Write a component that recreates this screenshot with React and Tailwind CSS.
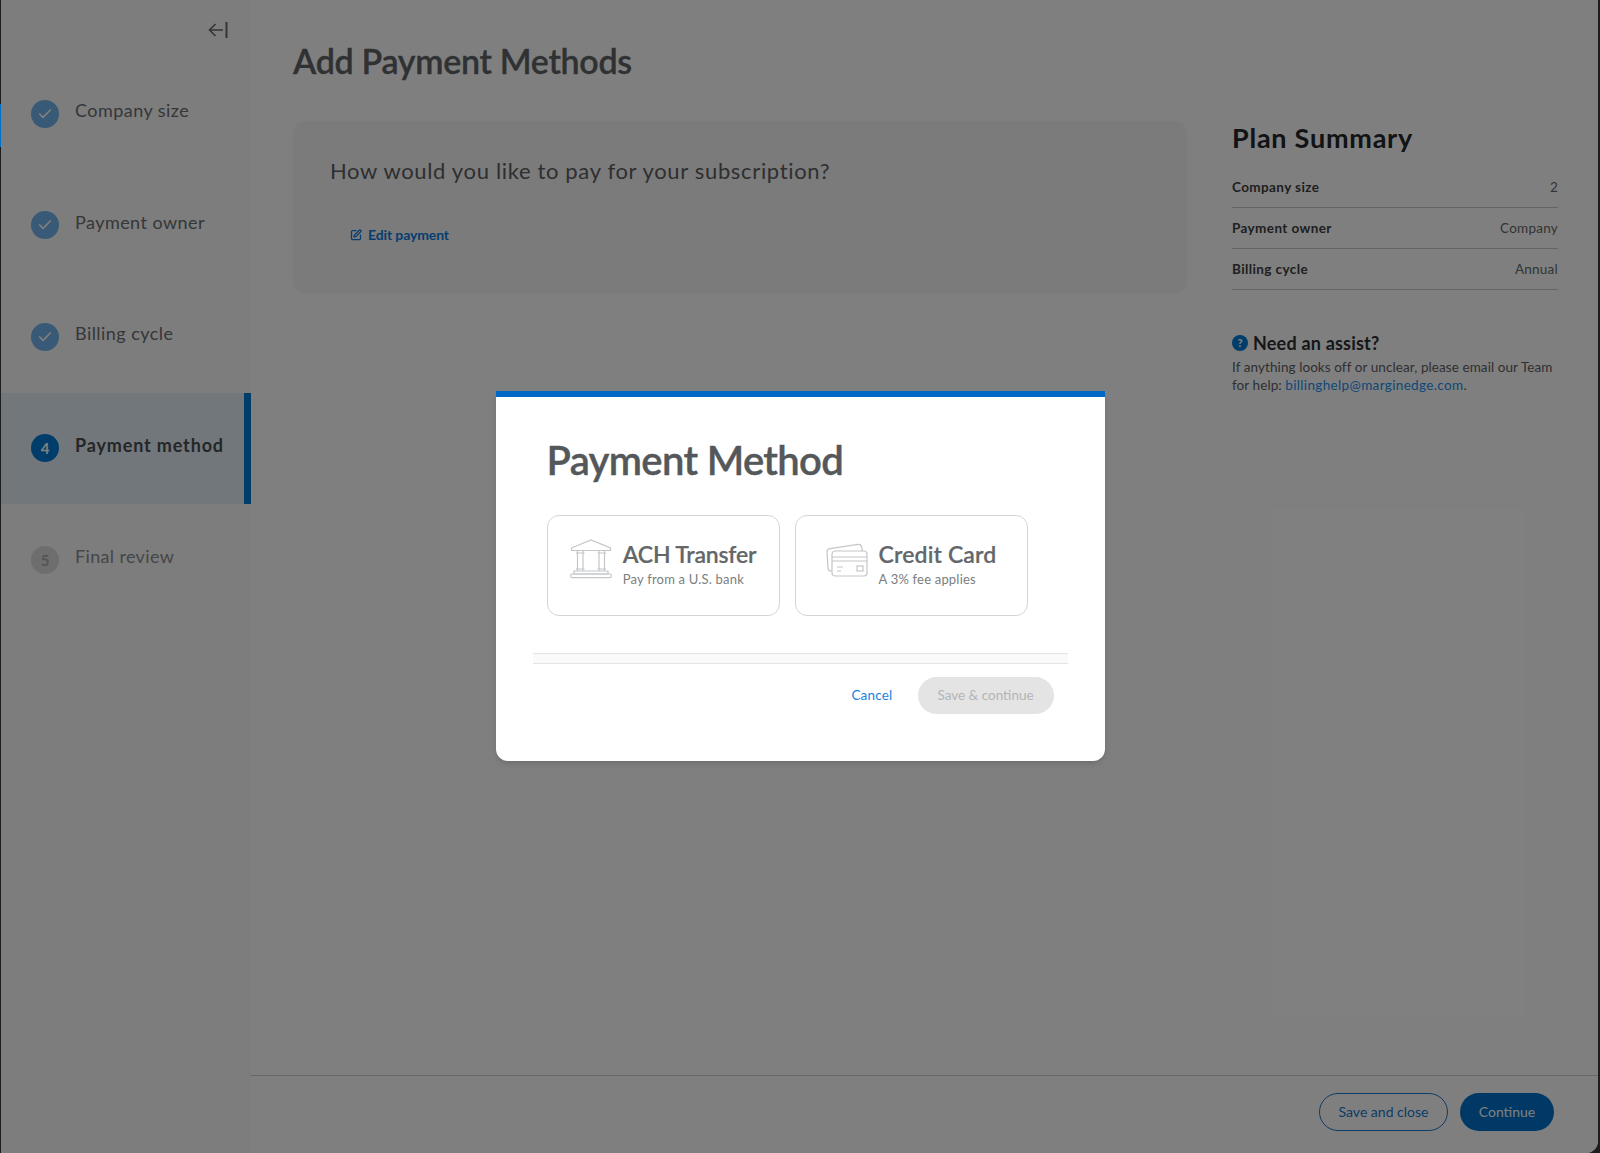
import React from 'react';
import { Check, SquarePen } from 'lucide-react';

const FONT = 'font-["Lato","Noto_Sans",sans-serif]';

const steps = [
    { label: 'Company size', state: 'done' },
    { label: 'Payment owner', state: 'done' },
    { label: 'Billing cycle', state: 'done' },
    { label: 'Payment method', state: 'active', num: 4 },
    { label: 'Final review', state: 'todo', num: 5 },
];

const summary = [
    ['Company size', '2'],
    ['Payment owner', 'Company'],
    ['Billing cycle', 'Annual'],
];

const StepBadge = ({ step }) => {
    if (step.state === 'done') {
        return (
            <span className="w-7 h-7 rounded-full bg-[#70b4ec] flex items-center justify-center shrink-0">
                <Check className="w-4 h-4 text-white" strokeWidth={2.5} />
            </span>
        );
    }
    if (step.state === 'active') {
        return (
            <span className="w-7 h-7 rounded-full bg-[#007ad6] flex items-center justify-center shrink-0 text-[15px] font-bold text-white">
                {step.num}
            </span>
        );
    }
    return (
        <span className="w-7 h-7 rounded-full bg-[#dcdcdc] flex items-center justify-center shrink-0 text-[15px] font-bold text-[#a8a8a8]">
            {step.num}
        </span>
    );
};

const BankIcon = () => (
    <svg width="42" height="40" viewBox="0 0 42 40" fill="none" stroke="#c4c6c8" strokeWidth="1.2" className="shrink-0 -mt-[10px]">
        <path d="M1.5 9 L21 1 L40.5 9 V11.5 H1.5 Z" />
        <path d="M7.5 11.5 V32 M13 11.5 V32 M29 11.5 V32 M34.5 11.5 V32" />
        <path d="M6 14 H14.5 M27.5 14 H36 M6 30 H14.5 M27.5 30 H36" />
        <path d="M4 32 H38 V35 H4 Z" />
        <rect x="0.8" y="35" width="40.4" height="3.6" rx="1" />
    </svg>
);

const CardIcon = () => (
    <svg width="42" height="34" viewBox="0 0 42 34" fill="none" stroke="#c4c6c8" strokeWidth="1.2" className="shrink-0 -mt-[8px]">
        <path d="M6 28 L5 28 Q2 28 2 25 L1 9 Q1 6 4 5.6 L32 1.4 Q35 1 35.6 4 L36.5 8" />
        <rect x="6" y="8" width="35" height="25" rx="3" />
        <path d="M6 14 H41 M6 18 H41" />
        <path d="M11 24 H17 M11 28 H15" />
        <rect x="31" y="23" width="6" height="5" />
    </svg>
);

const PayOption = ({ icon, title, sub, titleTracking }) => (
    <button className="w-[233px] h-[101px] border border-[#d5d5d5] rounded-xl bg-white flex items-center justify-center gap-[12px] pb-1">
        {icon}
        <span className="flex flex-col items-start -ml-[1px]">
            <span className={`text-[23px] leading-[30px] font-semibold text-[#63676a] [-webkit-text-stroke:0.2px] ${titleTracking}`}>{title}</span>
            <span className="text-[13px] leading-[20px] text-[#7b7e80] tracking-[0.2px]">{sub}</span>
        </span>
    </button>
);

const App = () => {
    return (
        <div className={`${FONT} relative w-full h-[1153px] overflow-hidden bg-[#3a3a3a]`}>
            <div className="flex h-full ml-px mr-[2px] rounded-br-xl overflow-hidden bg-white">
                {/* sidebar */}
                <aside className="w-[250px] shrink-0 bg-[#fafafa]">
                    <div className="flex justify-end pt-[21px] pr-[23px] h-[58px]">
                        <svg width="20" height="18" viewBox="0 0 20 18" fill="none" stroke="#686a6c" strokeWidth="1.6">
                            <path d="M1.5 9 H15 M7.5 3 L1.5 9 L7.5 15" />
                            <path d="M18.5 1 V17" strokeWidth="2" />
                        </svg>
                    </div>
                    <nav className="flex flex-col">
                        {steps.map((step) => (
                            <div
                                key={step.label}
                                className={`h-[111.5px] pl-[30px] flex items-center gap-[16px] ${step.state === 'active' ? 'bg-[#e4eef6] border-r-[7px] border-[#007ad6]' : ''}`}
                            >
                                <StepBadge step={step} />
                                <span className={`text-[18px] -mt-[6px] ${step.state === 'active' ? 'font-bold text-[#4a4c4e] tracking-[0.85px]' : step.state === 'done' ? 'text-[#6c6e70] tracking-[0.45px]' : 'text-[#8a8c8e] tracking-[0.35px]'}`}>
                                    {step.label}
                                </span>
                            </div>
                        ))}
                    </nav>
                </aside>

                {/* main */}
                <div className="flex-1 flex flex-col bg-white">
                    <div className="flex-1 flex pl-[42px] pr-[40px]">
                        <main className="w-[894px]">
                            <h1 className="text-[34px] leading-[42px] mt-[40px] font-semibold text-[#606366] tracking-[-0.3px] [-webkit-text-stroke:0.3px]">Add Payment Methods</h1>
                            <section className="mt-[39px] h-[172px] rounded-xl bg-[#f7f7f7] pl-[37px] pt-[35px]">
                                <p className="text-[22px] leading-[30px] text-[#5c5e60] tracking-[0.66px]">How would you like to pay for your subscription?</p>
                                <a className="mt-[38px] ml-[20px] flex items-center gap-[6px] text-[14px] font-bold text-[#0e7be0] tracking-[-0.12px]">
                                    <SquarePen className="w-[12px] h-[12px]" strokeWidth={2.5} />
                                    Edit payment
                                </a>
                            </section>
                        </main>
                        <aside className="w-[326px] ml-[45px]">
                            <h2 className="text-[27px] leading-[32px] mt-[122px] font-bold text-[#242628] tracking-[0.75px]">Plan Summary</h2>
                            <dl className="mt-[13px]">
                                {summary.map(([k, v]) => (
                                    <div key={k} className="h-[41px] flex items-center justify-between border-b border-[#c8c8c8] text-[13.5px]">
                                        <dt className="font-bold text-[#3c3e40] tracking-[0.4px]">{k}</dt>
                                        <dd className="text-[#66686a] tracking-[0.25px]">{v}</dd>
                                    </div>
                                ))}
                            </dl>
                            <div className="mt-[41px] flex items-center gap-[5px]">
                                <span className="w-[16px] h-[16px] rounded-full bg-[#007ad6] text-white text-[11px] font-black flex items-center justify-center">?</span>
                                <span className="text-[18px] leading-[24px] font-bold text-[#2c2e30] tracking-[0.2px]">Need an assist?</span>
                            </div>
                            <p className="mt-[3px] text-[13.5px] leading-[18px] text-[#5e6062] tracking-[0.08px]">
                                If anything looks off or unclear, please email our Team for help: <a className="text-[#1a90f0] tracking-[0.35px]">billinghelp@marginedge.com</a>.
                            </p>
                        </aside>
                    </div>
                    <footer className="h-[78px] shrink-0 border-t border-[#d0d0d0] flex items-center justify-end gap-[12px] pr-[44px] pb-[6px]">
                        <button className="w-[129px] h-[38px] rounded-full border border-[#1878d0] text-[14px] text-[#1878d0]">Save and close</button>
                        <button className="w-[94px] h-[38px] rounded-full bg-[#0072cc] text-[14px] text-white">Continue</button>
                    </footer>
                </div>
            </div>

            {/* modal */}
            <div className="absolute inset-0 bg-black/50 flex items-start justify-center">
                <div className="mt-[391px] w-[609px] h-[370px] bg-white rounded-b-xl border-t-[6px] border-[#0067c7] shadow-md">
                    <div className="pt-[38px] pl-[51px]">
                        <h2 className="text-[40px] leading-[50px] font-semibold text-[#54585b] tracking-[-0.65px] [-webkit-text-stroke:0.4px]">Payment Method</h2>
                        <div className="mt-[30px] flex gap-[15px]">
                            <PayOption icon={<BankIcon />} title="ACH Transfer" sub="Pay from a U.S. bank" titleTracking="tracking-[-0.2px]" />
                            <PayOption icon={<CardIcon />} title="Credit Card" sub="A 3% fee applies" titleTracking="tracking-[0.15px]" />
                        </div>
                    </div>
                    <div className="mt-[37px] mx-[37px] h-[11px] bg-[#fafafa] border-y border-[#e4e4e4]" />
                    <div className="mt-[13px] mr-[51px] flex items-center justify-end gap-[25px]">
                        <a className="text-[13.5px] text-[#1a7fe0] tracking-[0.2px]">Cancel</a>
                        <button className="w-[136px] h-[37px] rounded-full bg-[#e4e4e4] text-[13.5px] text-[#b4b4b4]">Save &amp; continue</button>
                    </div>
                </div>
            </div>

            {/* the bright sliver at the window edge sits above the dim layer */}
            <div className="absolute left-0 top-[104px] w-px h-[43px] bg-[#0070c8]" />
        </div>
    );
};

export default App;
